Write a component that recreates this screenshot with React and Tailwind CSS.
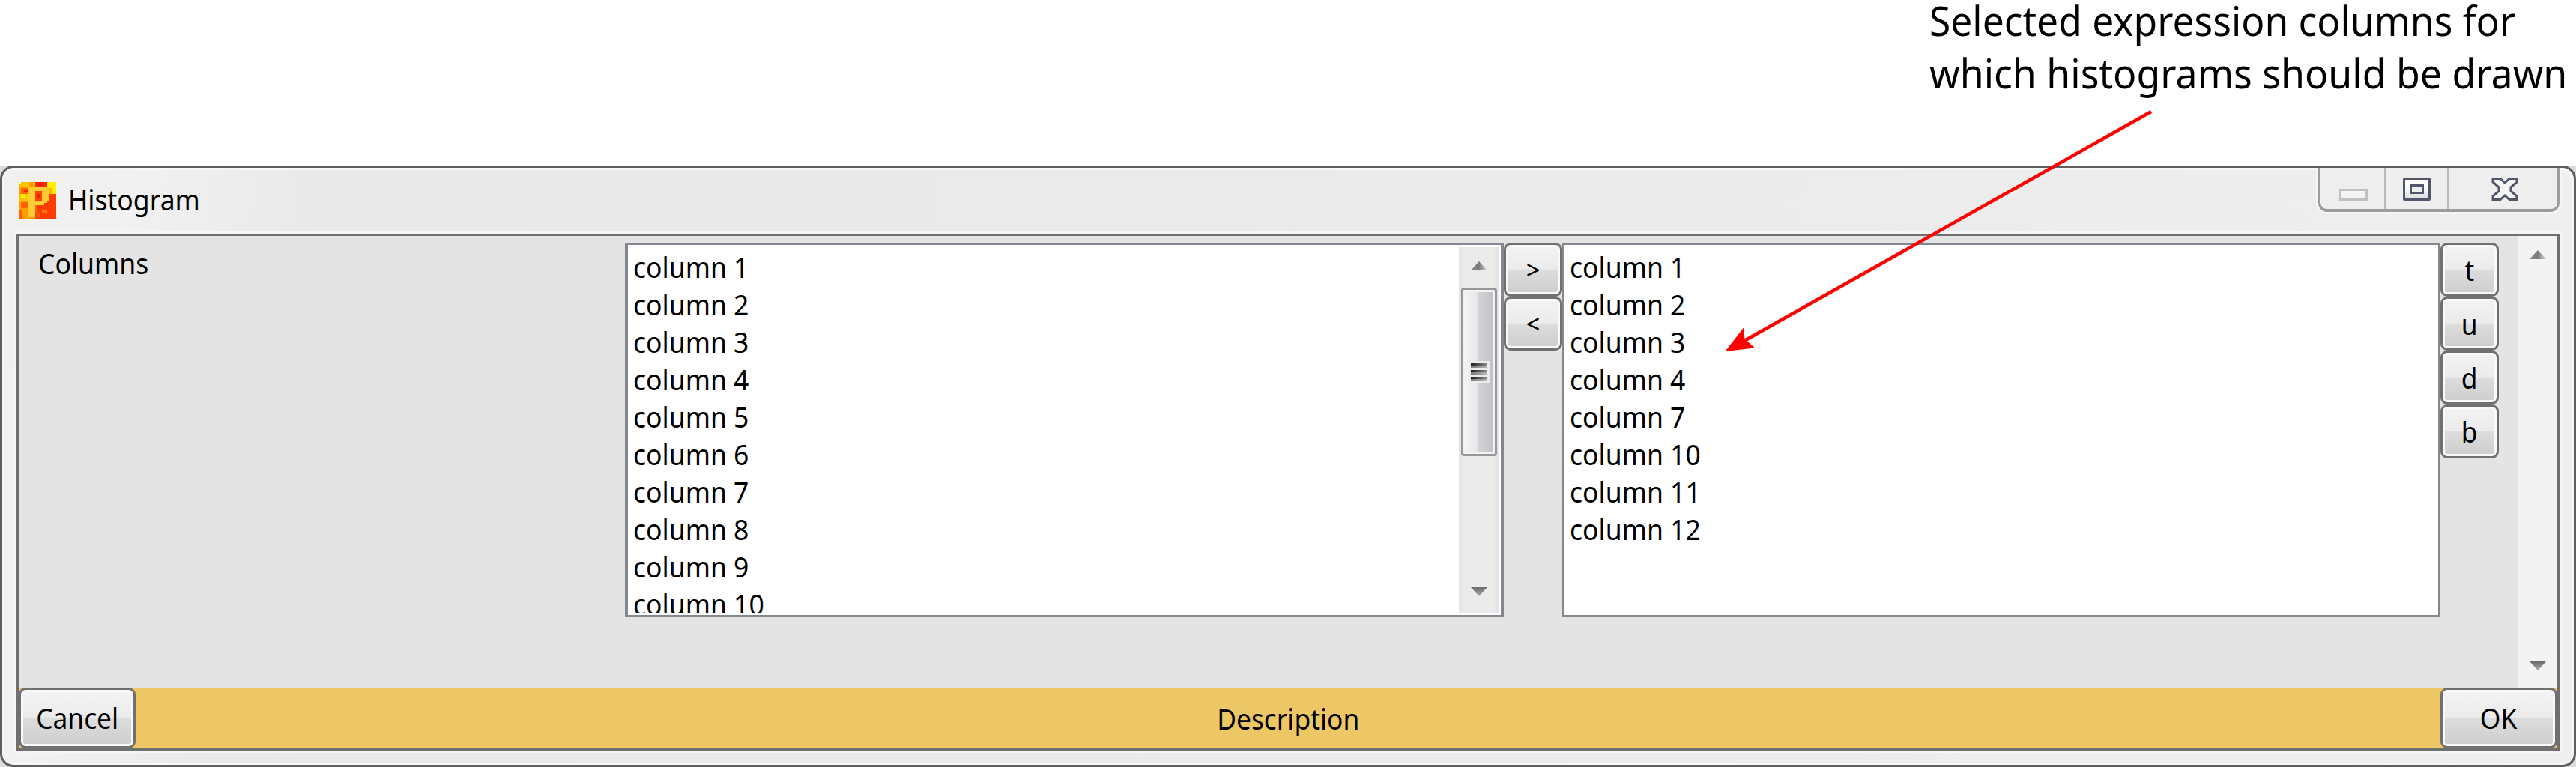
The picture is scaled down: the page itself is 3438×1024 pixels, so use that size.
import React from "react";

const LEFT = [1, 2, 3, 4, 5, 6, 7, 8, 9, 10];
const RIGHT = [1, 2, 3, 4, 7, 10, 11, 12];

function Btn({ children, className = "" }) {
  return (
    <button
      className={`flex shrink-0 items-center justify-center rounded-[9px] border-[3px] border-[#707070] shadow-[inset_0_0_0_3px_#f9f9f9] bg-[linear-gradient(#f3f3f3_0%,#ebebeb_49%,#dddddd_50%,#cdcdcd_100%)] ${className}`}
    >
      <span className="block origin-center scale-x-[0.93]">{children}</span>
    </button>
  );
}

function ArrowUp() {
  return (
    <svg width="22" height="12" viewBox="0 0 22 12">
      <defs>
        <linearGradient id="arrowUp" x1="0" x2="1">
          <stop offset="0" stopColor="#8a8a8a" />
          <stop offset="0.5" stopColor="#7b7b7b" />
          <stop offset="1" stopColor="#d5d5d5" />
        </linearGradient>
      </defs>
      <path d="M0 12L11 0L22 12Z" fill="url(#arrowUp)" />
    </svg>
  );
}

function ArrowDown() {
  return (
    <svg width="22" height="12" viewBox="0 0 22 12">
      <defs>
        <linearGradient id="arrowDown" x1="0" x2="0" y1="0" y2="1">
          <stop offset="0" stopColor="#6a6a6a" />
          <stop offset="1" stopColor="#a8a8a8" />
        </linearGradient>
      </defs>
      <path d="M0 0H22L11 12Z" fill="url(#arrowDown)" />
    </svg>
  );
}

function AppIcon() {
  return (
    <svg width="50" height="50" viewBox="0 0 50 50" shapeRendering="crispEdges" className="shrink-0">
      <rect width="50" height="50" fill="#ff3c00" />
      <path d="M0 0h22v50h-22z" fill="#ff9c00" />
      <path d="M0 0h14v6h-14zM0 16h13v9h-13zM19 0h4v6h-4z" fill="#ffc400" />
      <path d="M0 0h3v3h-3z" fill="#fff9b0" />
      <path d="M3 16h6v6h-6zM38 0h12v16h-6v-3h-6z" fill="#ffee00" />
      <path d="M3 8h10v8h-10zM3 27h10v8h-10zM0 37h4v12h-4z" fill="#ff6400" />
      <path d="M7 10h6v4h-6zM22 0h16v6h-16z" fill="#ff2400" />
      <path d="M38 8h6v8h-6z" fill="#ffb400" />
      <path d="M13 6h25v4h3v15h-3v3h-4v3h-12v16h-9z" fill="#ffcc33" />
      <path d="M22 12h9v13h-9z" fill="#ff4200" />
      <path d="M25 16h4v5h-4z" fill="#e02800" />
      <path d="M31 37h7v4h-7z" fill="#ff7a10" />
      <path d="M22 31h3v10h-3zM25 41h4v6h-4z" fill="#ff6000" />
    </svg>
  );
}

function Grip() {
  return (
    <div className="flex w-[28px] flex-col items-center gap-[3px] bg-[#ececee] py-[3px]">
      {[0, 1, 2].map((i) => (
        <div key={i} className="w-[22px]">
          <div className="h-[3px] bg-[linear-gradient(90deg,#1e1e1e,#8c8c8c)]" />
          <div className="h-[3px] bg-[linear-gradient(90deg,#7a7a7a,#b8b8b8)]" />
        </div>
      ))}
    </div>
  );
}

function List({ items, className = "", children }) {
  return (
    <div className={`flex h-[500px] border-y-[3px] border-[#828790] bg-white ${className}`}>
      <div className="h-[491px] flex-1 overflow-hidden pt-[4px] pl-[7px]">
        {items.map((n) => (
          <div key={n} className="h-[50.05px] leading-[50px] whitespace-pre">
            <span className="inline-block origin-left scale-x-[0.935]">column {n}</span>
          </div>
        ))}
      </div>
      {children}
    </div>
  );
}

export default function App() {
  return (
    <div className="relative flex h-[1024px] w-[3438px] flex-col overflow-hidden bg-white font-['Noto_Sans',sans-serif] text-[38px] text-black">
      <div className="h-[221px] shrink-0 pl-[2575px] text-[55px] leading-[70px] whitespace-nowrap">
        <div className="-mt-[8px]">
          <span className="inline-block origin-left scale-x-[0.937]">Selected expression columns for</span>
        </div>
        <div>
          <span className="inline-block origin-left scale-x-[0.941]">which histograms should be drawn</span>
        </div>
      </div>

      <div className="flex-1 bg-[#dcdcdc]">
        <div className="flex h-full flex-col rounded-[18px] border-[3px] border-[#5e5e5e] bg-[linear-gradient(100deg,#f0f0f0_0%,#f1f1f1_5%,#e9e9e9_12%,#ebebeb_60%,#efefef_100%)] px-[19px] pb-[19px] shadow-[inset_0_0_0_3px_#f7f7f7]">
          <header className="flex h-[88px] shrink-0 justify-between">
            <div className="flex pt-[19px] pl-[3px]">
              <AppIcon />
              <span className="ml-[16px] block h-[50px] origin-left scale-x-[0.935] leading-[46px]">Histogram</span>
            </div>
            <div className="flex h-[59px] w-[322px] rounded-b-[12px] border-x-[3px] border-b-[4px] border-[#9d9d9d] bg-[#eeeeee] shadow-[0_0_0_3px_#f5f5f5] [clip-path:inset(0_-3px_-3px_-3px)]">
              <div className="w-[88px] border-r-[3px] border-[#b9b9b9] pt-[28px] pl-[25px]">
                <div className="h-[16px] w-[38px] border-[3px] border-[#c0c0c0] bg-[#f4f4f4]" />
              </div>
              <div className="w-[84px] border-r-[3px] border-[#b9b9b9] pt-[13px] pl-[22px]">
                <div className="h-[31px] w-[37px] rounded-[2px] border-[3px] border-[#53566a] bg-[linear-gradient(#fff_35%,#ddd)] p-[6px]">
                  <div className="h-[13px] w-[19px] border-[3px] border-[#53566a] bg-[#eee]" />
                </div>
              </div>
              <svg width="36" height="31" viewBox="0 0 36 31" className="mt-[13px] ml-[56px]">
                <path
                  d="M2 1.500H12L18 7L24 1.500H34V6L26 13V18L34 25V29.500H24L18 24L12 29.500H2V25L10 18V13L2 6Z"
                  fill="#f4f4f4"
                  stroke="#53566a"
                  strokeWidth="3"
                />
              </svg>
            </div>
          </header>

          <main className="flex flex-1 flex-col border-[3px] border-[#707070] bg-[#e4e4e4] shadow-[0_0_0_3px_#f5f5f5]">
            <div className="flex h-[603px]">
              <div className="w-[809px] pt-[10px] pl-[26px] leading-[52px]">
                <span className="block origin-left scale-x-[0.935]">Columns</span>
              </div>
              <div className="flex items-start pt-[9px]">
                <List items={LEFT} className="w-[1173px] border-x-[4px]">
                  <div className="mt-[3px] mr-[3px] flex h-[488px] w-[53px] flex-col items-center bg-[linear-gradient(90deg,#e3e3e3,#ebebeb_15%,#ebebeb_85%,#e3e3e3)] pt-[19px] pb-[22px]">
                    <ArrowUp />
                    <div className="mt-[23px] flex h-[225px] w-[48px] flex-col items-center justify-center rounded-[4px] border-[3px] border-[#979797] bg-[linear-gradient(90deg,#f5f5f5,#e6e6e8_46%,#d3d3d6_48%,#bfbfc4)] shadow-[inset_0_0_0_3px_#f3f3f3]">
                      <Grip />
                    </div>
                    <div className="mt-auto flex">
                      <ArrowDown />
                    </div>
                  </div>
                </List>
                <div className="flex flex-col text-[35px]">
                  <Btn className="h-[72px] w-[78px]">&gt;</Btn>
                  <Btn className="h-[72px] w-[78px]">&lt;</Btn>
                </div>
                <List items={RIGHT} className="w-[1172px] border-x-[3px]" />
                <div className="flex flex-col">
                  {["t", "u", "d", "b"].map((c) => (
                    <Btn key={c} className="h-[72px] w-[78px]">{c}</Btn>
                  ))}
                </div>
              </div>
              <div className="ml-auto flex w-[53px] flex-col items-center justify-between bg-[#f3f3f3] pt-[19px] pb-[23px]">
                <ArrowUp />
                <ArrowDown />
              </div>
            </div>
            <footer className="flex h-[81px] items-start justify-between bg-[#edc765]">
              <Btn className="h-[81px] w-[156px]">Cancel</Btn>
              <span className="block scale-x-[0.93] leading-[82px]">Description</span>
              <Btn className="h-[81px] w-[156px]">OK</Btn>
            </footer>
          </main>
        </div>
      </div>

      <svg width="600" height="340" viewBox="2290 140 600 340" className="pointer-events-none absolute top-[140px] left-[2290px]">
        <path d="M2871 149L2328 455" stroke="#ff0000" strokeWidth="4.500" />
        <path d="M2302.500 469L2327 437.500L2328.500 452L2342 464.500Z" fill="#ff0000" />
      </svg>
    </div>
  );
}
